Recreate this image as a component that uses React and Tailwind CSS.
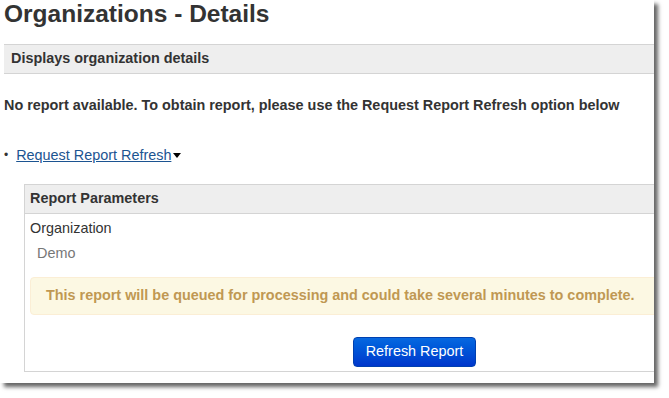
export default function App() {
  return (
    <div className="w-[669px] h-[398px] bg-white" style={{ fontFamily: '"Liberation Sans", Arial, sans-serif' }}>
      <div className="w-[654px] h-[383px] bg-white overflow-hidden shadow-[4px_4px_4px_rgba(0,0,0,0.6)] text-[#333]">
        <h1 className="text-[24.5px] leading-[28px] font-bold pl-[4px] pt-[0px]">Organizations - Details</h1>
        <div className="mt-[16px] ml-[4px] w-[700px] h-[30px] bg-[#eeeeee] border-y border-[#d4d4d4] flex items-center pl-[7px]">
          <span className="text-[14.4px] font-bold">Displays organization details</span>
        </div>
        <p className="mt-[22px] pl-[4px] text-[14.4px] font-bold leading-[18px]">
          No report available. To obtain report, please use the Request Report Refresh option below
        </p>
        <div className="mt-[32px] flex items-center pl-[4px] text-[14.4px] leading-[18px]">
          <span className="text-[12px] mr-[8px]">•</span>
          <a className="text-[#1c5491] underline">Request Report Refresh</a>
          <svg width="8" height="5" viewBox="0 0 8 5" className="ml-[2px]"><path d="M0 0h8L4 5z" fill="#000" /></svg>
        </div>
        <div className="mt-[20px] ml-[24px] w-[700px] border border-[#d4d4d4]">
          <div className="h-[29px] bg-[#eeeeee] border-b border-[#d4d4d4] flex items-center pl-[5px]">
            <span className="text-[14.4px] font-bold">Report Parameters</span>
          </div>
          <div className="pl-[5px] pt-[5px] text-[14.4px] leading-[18px]">Organization</div>
          <div className="pl-[12px] pt-[7px] text-[14.4px] leading-[18px] text-[#777]">Demo</div>
          <div className="mt-[15px] ml-[5px] h-[38px] bg-[#fcf8e3] border border-[#fbeed5] rounded-[4px] flex items-center pl-[15px]">
            <span className="text-[14.4px] font-bold text-[#c09853]">This report will be queued for processing and could take several minutes to complete.</span>
          </div>
          <div className="pt-[22px] pb-[4px] pl-[328px]">
            <button className="w-[123px] h-[30px] rounded-[4px] border border-[#0040b0] bg-gradient-to-b from-[#0868e0] to-[#0036cc] text-white text-[14.4px]">Refresh Report</button>
          </div>
        </div>
      </div>
    </div>
  );
}
